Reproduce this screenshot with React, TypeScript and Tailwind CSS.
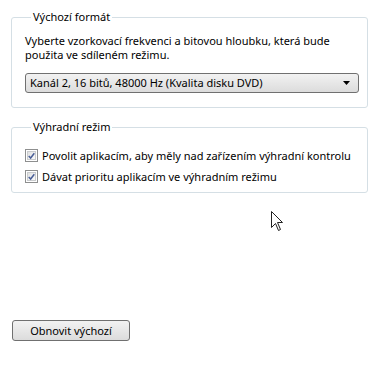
import React from "react";

const font = { fontFamily: '"Noto Sans", "Segoe UI", sans-serif' };

function Checkbox() {
  return (
    <span className="w-[13px] h-[13px] border border-[#8e8f8f] p-[1px] bg-white shrink-0">
      <span className="w-full h-full border border-[#c9cbcd] bg-gradient-to-br from-[#e0e1e2] to-[#fafafa] flex items-center justify-center">
        <svg width="8" height="8" viewBox="0 0 8 8">
          <path d="M0.8 4 L3 6.3 L7.2 0.8" fill="none" stroke="#4a5f97" strokeWidth="1.7" />
        </svg>
      </span>
    </span>
  );
}

function Cursor() {
  return (
    <svg className="absolute left-[271px] top-[211px]" width="14" height="22" viewBox="0 0 14 22">
      <path
        d="M0.5 0.5 L0.5 16.5 L4.5 12.5 L7.5 19.5 L9.5 18.5 L6.5 11.5 L11.5 11.5 Z"
        fill="white"
        stroke="#222"
        strokeWidth="1"
      />
    </svg>
  );
}

export default function App() {
  return (
    <div className="relative w-[383px] h-[380px] bg-white text-[11px] text-black pt-[9px]" style={font}>
      {/* Default format */}
      <fieldset className="min-w-0 mx-[11px] w-[357px] border border-[#d5dfe5] rounded-[3px] px-[13px] pb-[14px]">
        <legend className="ml-[6px] px-[2px] leading-[16px]">Výchozí formát</legend>
        <p className="mt-[9px] leading-[14px]">
          Vyberte vzorkovací frekvenci a bitovou hloubku, která bude použita ve sdíleném režimu.
        </p>
        <div className="mt-[11px] h-[20px] w-[334px] border border-[#707070] rounded-[3px] bg-gradient-to-b from-[#f2f2f2] to-[#dcdcdc] flex items-center justify-between pl-[4px] pr-[8px]">
          <span className="leading-[16px] whitespace-nowrap">Kanál 2, 16 bitů, 48000 Hz (Kvalita disku DVD)</span>
          <svg width="7" height="4" viewBox="0 0 7 4">
            <path d="M0 0 H7 L3.5 4 Z" fill="#000" />
          </svg>
        </div>
      </fieldset>

      {/* Exclusive mode */}
      <fieldset className="min-w-0 mt-[11px] mx-[11px] w-[357px] border border-[#d5dfe5] rounded-[3px] px-[13px] pb-[9px]">
        <legend className="ml-[6px] px-[2px] leading-[16px]">Výhradní režim</legend>
        <div className="mt-[14px] flex flex-col gap-[8px]">
          <label className="flex items-center gap-[4px] leading-[13px] whitespace-nowrap">
            <Checkbox />
            <span>Povolit aplikacím, aby měly nad zařízením výhradní kontrolu</span>
          </label>
          <label className="flex items-center gap-[4px] leading-[13px] whitespace-nowrap">
            <Checkbox />
            <span>Dávat prioritu aplikacím ve výhradním režimu</span>
          </label>
        </div>
      </fieldset>

      <button className="absolute left-[12px] top-[320px] w-[118px] h-[21px] border border-[#707070] rounded-[3px] bg-gradient-to-b from-[#f2f2f2] to-[#dcdcdc] text-[11px] leading-[16px]">
        Obnovit výchozí
      </button>

      <Cursor />
    </div>
  );
}
